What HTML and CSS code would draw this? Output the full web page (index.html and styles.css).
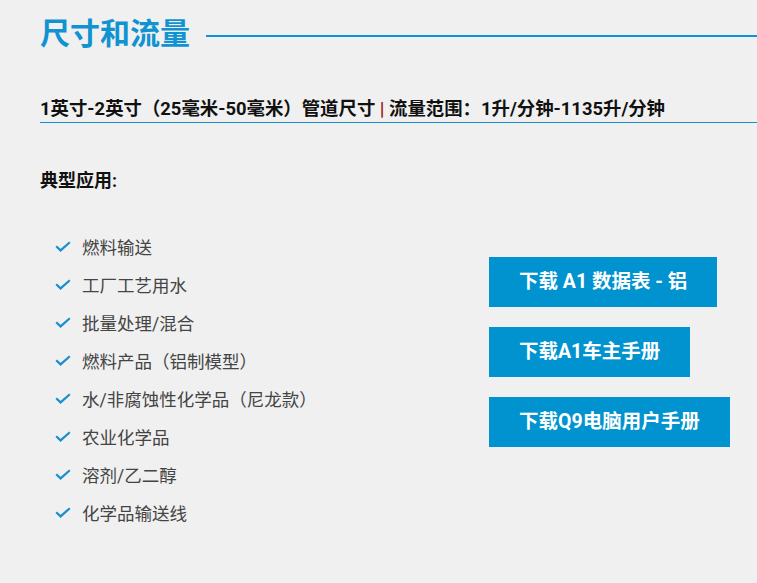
FILE: index.html
```html
<!DOCTYPE html>
<html lang="zh">
<head>
  <meta charset="UTF-8" />
  <meta name="viewport" content="width=device-width, initial-scale=1.0"/>
  <title>尺寸和流量</title>
  <link rel="stylesheet" href="styles.css">
</head>
<body>
  <div class="page">
    <h2 class="section-title"><span>尺寸和流量</span></h2>

    <p class="spec">1英寸-2英寸（25毫米-50毫米）管道尺寸 <span class="sep">|</span> 流量范围：1升/分钟-1135升/分钟</p>

    <h3 class="apps-title">典型应用:</h3>

    <div class="apps">
      <ul class="check-list">
        <li><svg class="check" viewBox="0 0 16 11"><polyline points="1.2,5.2 5.6,9.4 14.8,1.2"/></svg>燃料输送</li>
        <li><svg class="check" viewBox="0 0 16 11"><polyline points="1.2,5.2 5.6,9.4 14.8,1.2"/></svg>工厂工艺用水</li>
        <li><svg class="check" viewBox="0 0 16 11"><polyline points="1.2,5.2 5.6,9.4 14.8,1.2"/></svg>批量处理/混合</li>
        <li><svg class="check" viewBox="0 0 16 11"><polyline points="1.2,5.2 5.6,9.4 14.8,1.2"/></svg>燃料产品（铝制模型）</li>
        <li><svg class="check" viewBox="0 0 16 11"><polyline points="1.2,5.2 5.6,9.4 14.8,1.2"/></svg>水/非腐蚀性化学品（尼龙款）</li>
        <li><svg class="check" viewBox="0 0 16 11"><polyline points="1.2,5.2 5.6,9.4 14.8,1.2"/></svg>农业化学品</li>
        <li><svg class="check" viewBox="0 0 16 11"><polyline points="1.2,5.2 5.6,9.4 14.8,1.2"/></svg>溶剂/乙二醇</li>
        <li><svg class="check" viewBox="0 0 16 11"><polyline points="1.2,5.2 5.6,9.4 14.8,1.2"/></svg>化学品输送线</li>
      </ul>

      <div class="downloads">
        <a href="#" class="btn">下载 A1 数据表 - 铝</a>
        <a href="#" class="btn">下载A1车主手册</a>
        <a href="#" class="btn">下载Q9电脑用户手册</a>
      </div>
    </div>
  </div>
</body>
</html>
```

FILE: styles.css
```css
body {
  margin: 0;
  background-color: #f0f0f0;
  font-family: Roboto, "Noto Sans CJK SC", sans-serif;
  color: #111;
}

.page {
  padding: 16px 0 0 40px;
}

.section-title {
  display: flex;
  align-items: center;
  margin: 0;
  font-size: 30px;
  line-height: 36px;
  font-weight: bold;
  color: #1193d2;
}

.section-title::after {
  content: "";
  flex: 1;
  height: 2px;
  margin: 4px 0 0 16px;
  background-color: #1193d2;
}

.spec {
  margin: 45px 0 0;
  padding-bottom: 1px;
  font-size: 18.4px;
  line-height: 24px;
  font-weight: bold;
  border-bottom: 1px solid #1a8ecb;
}

.spec .sep {
  color: #9b1b1b;
}

.apps-title {
  margin: 46px 0 0;
  font-size: 18px;
  line-height: 24px;
  font-weight: bold;
}

.apps {
  display: grid;
  grid-template-columns: 449px auto;
  margin-top: 34px;
}

.check-list {
  list-style: none;
  margin: 0;
  padding: 0 0 0 15px;
}

.check-list li {
  display: flex;
  align-items: center;
  height: 38px;
  font-size: 17.5px;
  color: #444;
}

.check {
  width: 16px;
  height: 11px;
  margin: 1px 11px 0 0;
  fill: none;
  stroke: #1a8fd0;
  stroke-width: 2.2;
}

.downloads {
  display: flex;
  flex-direction: column;
  align-items: flex-start;
  gap: 20px;
  margin-top: 30px;
}

.btn {
  display: block;
  height: 50px;
  line-height: 50px;
  padding: 0 30px;
  background-color: #0093cf;
  color: white;
  font-size: 19.5px;
  font-weight: bold;
  text-decoration: none;
}
```
